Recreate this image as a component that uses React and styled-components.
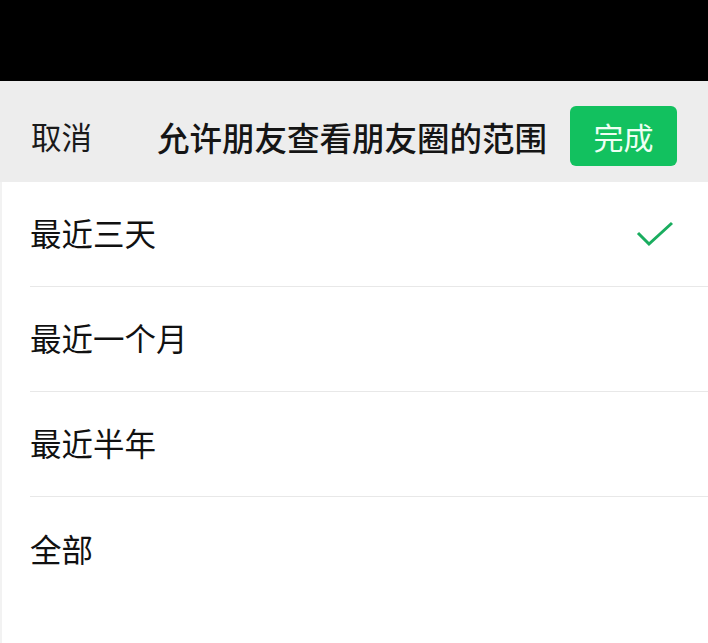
import React from "react";
import styled, { createGlobalStyle } from "styled-components";

const Global = createGlobalStyle`
  html, body {
    margin: 0;
    padding: 0;
    background: #fff;
    font-family: "Noto Sans CJK SC", "Noto Sans", sans-serif;
  }
`;

const StatusBar = styled.div`
  height: 81px;
  background: #000;
`;

const Header = styled.header`
  height: 101px;
  box-sizing: border-box;
  padding: 9px 31px 0 31px;
  background: #ededed;
  display: flex;
  align-items: center;
`;

const Cancel = styled.span`
  font-size: 30.5px;
  color: #1a1a1a;
`;

const Title = styled.h1`
  margin: 0 23px 0 auto;
  font-size: 32.5px;
  font-weight: 500;
  color: #151515;
`;

const Done = styled.button`
  width: 107px;
  height: 60px;
  border: none;
  border-radius: 6px;
  background: #12c15f;
  color: #eefff3;
  font-family: inherit;
  font-size: 30px;
  padding: 0;
`;

const List = styled.ul`
  list-style: none;
  margin: 0;
  padding: 0 0 0 28px;
  border-left: 2px solid #f2f2f2;
  min-height: calc(100vh - 182px);
  box-sizing: border-box;
`;

const Row = styled.li`
  height: 105px;
  box-sizing: border-box;
  display: flex;
  align-items: center;
  justify-content: space-between;
  padding: 0 34px 0 0;
  border-bottom: ${(p) => (p.$last ? "none" : "1px solid #e8e8e8")};
`;

const Label = styled.span`
  font-size: 31.5px;
  color: #111;
  margin-top: -4px;
`;

const Check = () => (
  <svg width="38" height="26" viewBox="0 0 38 26">
    <path d="M2 12 L13 23 L36 2" fill="none" stroke="#1aad5f" strokeWidth="3" />
  </svg>
);

const options = ["最近三天", "最近一个月", "最近半年", "全部"];

export default function App() {
  return (
    <>
      <Global />
      <StatusBar />
      <Header>
        <Cancel>取消</Cancel>
        <Title>允许朋友查看朋友圈的范围</Title>
        <Done>完成</Done>
      </Header>
      <List>
        {options.map((o, i) => (
          <Row key={o} $last={i === options.length - 1}>
            <Label>{o}</Label>
            {i === 0 && <Check />}
          </Row>
        ))}
      </List>
    </>
  );
}
